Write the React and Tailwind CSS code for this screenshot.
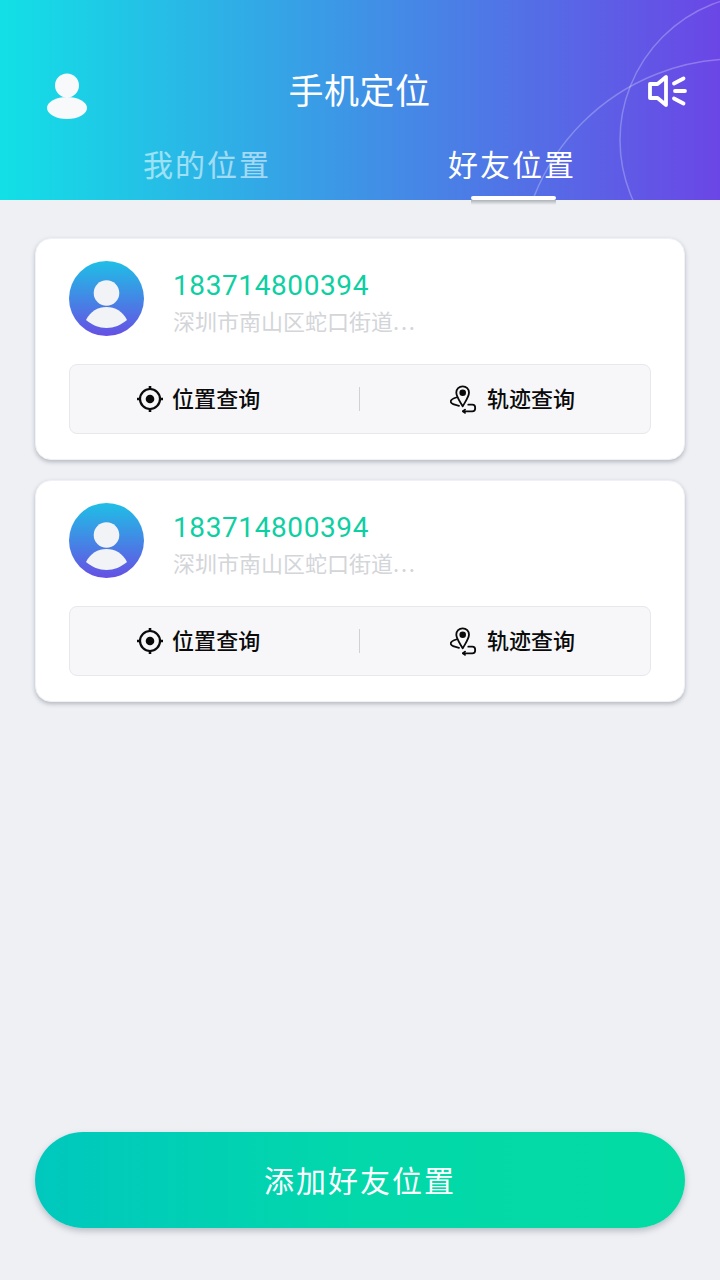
const cjk = { fontFamily: '"Noto Sans CJK SC", sans-serif' };

function UserIcon() {
  return (
    <svg width="42" height="46" viewBox="0 0 42 46" className="block">
      <circle cx="21" cy="12.500" r="12" fill="#f7f9fb" />
      <ellipse cx="21" cy="35" rx="20" ry="11" fill="#f7f9fb" />
    </svg>
  );
}

function SpeakerIcon() {
  return (
    <svg width="40" height="34" viewBox="0 0 40 34" fill="none" className="block" stroke="#fff" strokeWidth="3.800" strokeLinecap="round" strokeLinejoin="round">
      <path d="M3 10h7.500L19 3v28l-8.500-7H3z" />
      <path d="M27 9.500l9.500-5M28 17h10M27 24.500l9.500 5" />
    </svg>
  );
}

function Avatar() {
  return (
    <div className="w-[75px] h-[75px] rounded-full bg-[linear-gradient(180deg,#1fbfe6,#6650e4)] shrink-0 overflow-hidden">
      <svg width="75" height="75" viewBox="0 0 75 75" className="block">
        <circle cx="37.500" cy="32" r="12.800" fill="#f1f3f6" />
        <path d="M17 59C21 50.500 29 46 37.500 46S54 50.500 58 59C52 64 45 67 37.500 67S23 64 17 59Z" fill="#f1f3f6" />
      </svg>
    </div>
  );
}

function TargetIcon() {
  return (
    <svg width="28" height="28" viewBox="0 0 28 28" fill="none" className="block" stroke="#0a0a0a" strokeWidth="2.200">
      <circle cx="14" cy="14" r="10" />
      <circle cx="14" cy="14" r="4.300" fill="#0a0a0a" stroke="none" />
      <path d="M14 1v3M14 24v3M1 14h3M24 14h3" strokeWidth="2.600" />
    </svg>
  );
}

function RouteIcon() {
  return (
    <svg width="28" height="30" viewBox="0 0 28 30" fill="none" className="block" stroke="#0a0a0a" strokeWidth="1.800" strokeLinecap="round" strokeLinejoin="round">
      <path d="M12.700 2.300c-3.700 0-6.400 2.800-6.400 6.300 0 4.400 3.800 9 6.400 13.700 2.600-4.700 6.300-9.300 6.300-13.700 0-3.500-2.600-6.300-6.300-6.300Z" />
      <circle cx="12.700" cy="8.800" r="3.300" fill="#0a0a0a" stroke="none" />
      <path d="M6.300 13.500C3 14.500.7 15.700.7 17.600c0 2.300 3.600 3.400 8.300 4.200" />
      <path d="M18.300 20.700h4c1.700 0 2.900 1.400 2.900 3.200 0 1.900-1.200 3.400-2.900 3.400H13" />
      <path d="M15 25.600 13 27.300l2 1.600" />
    </svg>
  );
}

function Card() {
  return (
    <div className="bg-white rounded-2xl border border-[#f0f1f4] shadow-[0_2px_4px_rgba(90,95,105,0.38)] h-[222px] pt-[22px] px-[33px]">
      <div className="flex items-start h-[103px]">
        <Avatar />
        <div className="ml-[29px]">
          <div className="text-[28px] leading-[32px] tracking-[0.6px] text-[#0ecfa2] mt-[9px]" style={{ fontFamily: 'Roboto, sans-serif' }}>183714800394</div>
          <div className="text-[22px] leading-[30px] text-[#d3d5d9] mt-[3px]" style={cjk}>深圳市南山区蛇口街道<span className="tracking-[1.800px]">...</span></div>
        </div>
      </div>
      <div className="h-[70px] rounded-lg border border-[#e7e8ec] bg-[#f7f7fa] grid grid-cols-2 items-center relative">
        <div className="flex items-center pl-[66px] gap-[8px]">
          <TargetIcon />
          <span className="text-[22px] leading-none font-medium text-[#0b0b0b] -mt-[5px] tracking-[0.1px]" style={cjk}>位置查询</span>
        </div>
        <div className="flex items-center pl-[90px] gap-[9px] relative">
          <div className="absolute -left-px top-1/2 -translate-y-1/2 w-px h-[24px] bg-[#cfd1d5]" />
          <RouteIcon />
          <span className="text-[22px] leading-none font-medium text-[#0b0b0b] -mt-[5px]" style={cjk}>轨迹查询</span>
        </div>
      </div>
    </div>
  );
}

export default function App() {
  return (
    <div className="relative w-[720px] h-[1280px] bg-[#eef0f4] flex flex-col overflow-hidden" style={cjk}>
      <header className="relative h-[200px] shrink-0 bg-[linear-gradient(90deg,#12e0e6,#6b46e6)] overflow-hidden">
        <svg width="720" height="200" viewBox="0 0 720 200" fill="none" className="absolute inset-0" stroke="#ffffff" strokeOpacity="0.26" strokeWidth="1.500">
          <circle cx="766" cy="140" r="146" />
          <circle cx="736" cy="276" r="217" />
        </svg>
        <div className="relative grid grid-cols-[1fr_auto_1fr] items-center h-[146px] pt-[36px] pl-[46px] pr-[33px]">
          <div className="mt-[10px]"><UserIcon /></div>
          <h1 className="text-[35px] leading-none font-normal text-white tracking-[0.5px] -mt-[5px] -ml-[14px]">手机定位</h1>
          <div className="justify-self-end"><SpeakerIcon /></div>
        </div>
        <div className="relative flex -mt-[3px]">
          <div className="w-[412px] pl-[143px] text-[30px] leading-[40px] text-white/55 tracking-[2px]">我的位置</div>
          <div className="pl-[36px] text-[30px] leading-[40px] text-white tracking-[2px]">好友位置</div>
        </div>
        <div className="absolute left-[471px] bottom-0 w-[85px] h-[4px] bg-white rounded-sm" />
      </header>
      <div className="absolute left-[471px] top-[200px] w-[85px] h-[5px] bg-[linear-gradient(180deg,#aeb3b8,#eef0f4)]" />
      <main className="flex-1 flex flex-col px-[35px] pt-[38px] pb-[52px]">
        <div className="flex flex-col gap-[20px]">
          <Card />
          <Card />
        </div>
        <button className="mt-auto h-[96px] rounded-[48px] bg-[linear-gradient(90deg,#00c8be,#02d8aa_50%,#03dba3)] shadow-[0_3px_6px_rgba(90,95,110,0.35)] text-white text-[30px] tracking-[2px] leading-none pb-[2px]">
          添加好友位置
        </button>
      </main>
    </div>
  );
}
